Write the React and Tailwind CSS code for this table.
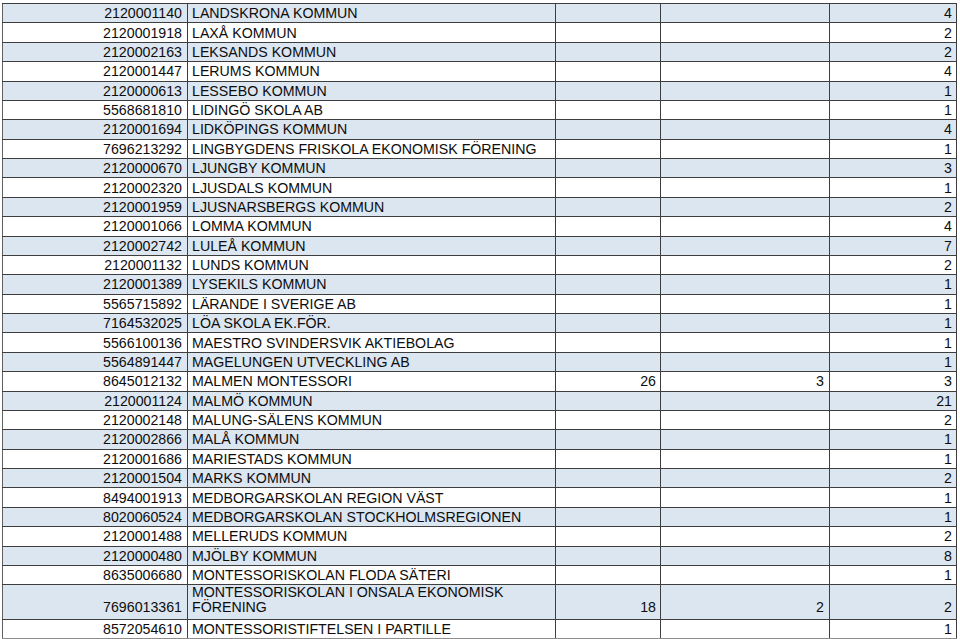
const rows = [
  ["2120001140", "LANDSKRONA KOMMUN", "", "", "4"],
  ["2120001918", "LAXÅ KOMMUN", "", "", "2"],
  ["2120002163", "LEKSANDS KOMMUN", "", "", "2"],
  ["2120001447", "LERUMS KOMMUN", "", "", "4"],
  ["2120000613", "LESSEBO KOMMUN", "", "", "1"],
  ["5568681810", "LIDINGÖ SKOLA AB", "", "", "1"],
  ["2120001694", "LIDKÖPINGS KOMMUN", "", "", "4"],
  ["7696213292", "LINGBYGDENS FRISKOLA EKONOMISK FÖRENING", "", "", "1"],
  ["2120000670", "LJUNGBY KOMMUN", "", "", "3"],
  ["2120002320", "LJUSDALS KOMMUN", "", "", "1"],
  ["2120001959", "LJUSNARSBERGS KOMMUN", "", "", "2"],
  ["2120001066", "LOMMA KOMMUN", "", "", "4"],
  ["2120002742", "LULEÅ KOMMUN", "", "", "7"],
  ["2120001132", "LUNDS KOMMUN", "", "", "2"],
  ["2120001389", "LYSEKILS KOMMUN", "", "", "1"],
  ["5565715892", "LÄRANDE I SVERIGE AB", "", "", "1"],
  ["7164532025", "LÖA SKOLA EK.FÖR.", "", "", "1"],
  ["5566100136", "MAESTRO SVINDERSVIK AKTIEBOLAG", "", "", "1"],
  ["5564891447", "MAGELUNGEN UTVECKLING AB", "", "", "1"],
  ["8645012132", "MALMEN MONTESSORI", "26", "3", "3"],
  ["2120001124", "MALMÖ KOMMUN", "", "", "21"],
  ["2120002148", "MALUNG-SÄLENS KOMMUN", "", "", "2"],
  ["2120002866", "MALÅ KOMMUN", "", "", "1"],
  ["2120001686", "MARIESTADS KOMMUN", "", "", "1"],
  ["2120001504", "MARKS KOMMUN", "", "", "2"],
  ["8494001913", "MEDBORGARSKOLAN REGION VÄST", "", "", "1"],
  ["8020060524", "MEDBORGARSKOLAN STOCKHOLMSREGIONEN", "", "", "1"],
  ["2120001488", "MELLERUDS KOMMUN", "", "", "2"],
  ["2120000480", "MJÖLBY KOMMUN", "", "", "8"],
  ["8635006680", "MONTESSORISKOLAN FLODA SÄTERI", "", "", "1"],
  ["7696013361", ["MONTESSORISKOLAN I ONSALA EKONOMISK", "FÖRENING"], "18", "2", "2"],
  ["8572054610", "MONTESSORISTIFTELSEN I PARTILLE", "", "", "1"],
];

export default function App() {
  return (
    <div className="w-[960px] h-[639px] bg-white overflow-hidden pt-[3px] pl-[2px] font-['Liberation_Sans',Arial,sans-serif] text-[14.2px] text-[#0d0d0d]">
      <table className="table-fixed border-collapse w-[954px] border-t border-b-2 border-t-[#a0a0a0] border-b-[#8c8c8c]">
        <colgroup>
          <col className="w-[185px]" />
          <col className="w-[368px]" />
          <col className="w-[105px]" />
          <col className="w-[169px]" />
          <col className="w-[127px]" />
        </colgroup>
        <tbody>
          {rows.map((r, i) => {
            const double = Array.isArray(r[1]);
            const bg = i % 2 === 0 ? "bg-[#dce6f1]" : "bg-white";
            const cell = double
              ? "border border-[#3e3e3e] align-bottom leading-[15px] pb-[4px]"
              : "border border-[#3e3e3e] align-middle leading-[18px]";
            return (
              <tr key={r[0]} className={`${bg} ${double ? "h-[34.6px]" : "h-[19.38px]"}`}>
                <td className={`${cell} border-l-[#606060] text-right pr-[5px]`}>{r[0]}</td>
                <td className={`${cell} text-left pl-[4px] whitespace-nowrap`}>
                  {double ? (
                    <>
                      {r[1][0]}
                      <br />
                      {r[1][1]}
                    </>
                  ) : (
                    r[1]
                  )}
                </td>
                <td className={`${cell} text-right pr-[4px]`}>{r[2]}</td>
                <td className={`${cell} text-right pr-[5px]`}>{r[3]}</td>
                <td className={`${cell} text-right pr-[4px]`}>{r[4]}</td>
              </tr>
            );
          })}
        </tbody>
      </table>
    </div>
  );
}
